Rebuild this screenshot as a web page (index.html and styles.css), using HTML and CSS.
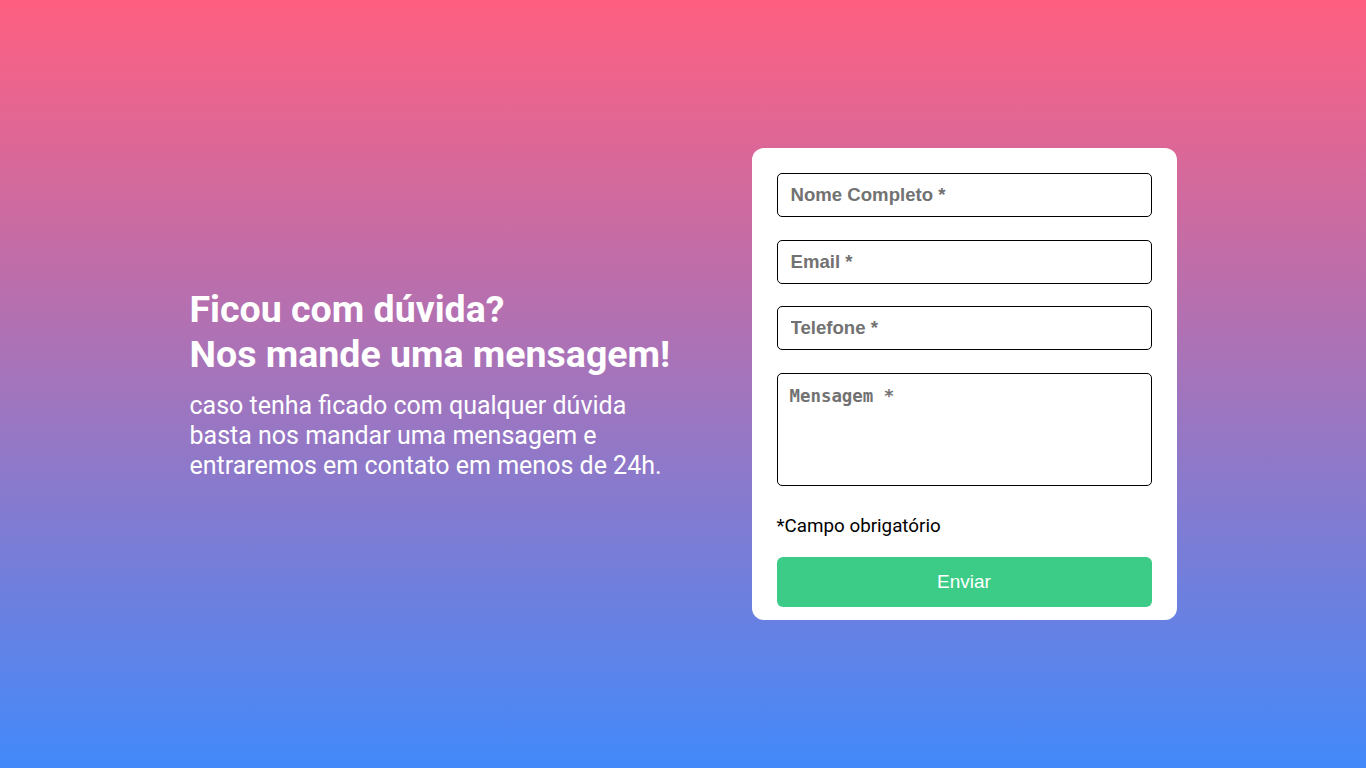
FILE: index.html
```html
<!DOCTYPE html>
<html lang="pt-BR">
<head>
<meta charset="utf-8">
<title>Contato</title>
<link rel="stylesheet" href="styles.css">
</head>
<body>
<main class="page">
  <section class="intro">
    <h1 class="title">Ficou com dúvida?<br>Nos mande uma mensagem!</h1>
    <p class="lead">caso tenha ficado com qualquer dúvida basta nos mandar uma mensagem e entraremos em contato em menos de 24h.</p>
  </section>
  <form class="card">
    <input class="field" type="text" placeholder="Nome Completo *">
    <input class="field" type="email" placeholder="Email *">
    <input class="field" type="tel" placeholder="Telefone *">
    <textarea class="field area" placeholder="Mensagem *"></textarea>
    <p class="note">*Campo obrigatório</p>
    <button class="submit" type="button">Enviar</button>
  </form>
</main>
</body>
</html>
```

FILE: styles.css
```css
* { box-sizing: border-box; }
html, body { margin: 0; height: 100%; }
body {
  background: linear-gradient(180deg, #ff5f80 0%, #a374bc 50%, #4289fa 100%);
  font-family: Roboto, "Liberation Sans", sans-serif;
}
.page {
  height: 768px;
  display: flex;
  align-items: center;
  justify-content: center;
  gap: 82px;
}
.intro {
  width: 480px;
  color: #fff;
}
.title {
  margin: 0 0 14.5px;
  font-size: 37.5px;
  font-weight: 700;
  line-height: 45px;
  white-space: nowrap;
}
.lead {
  margin: 0;
  font-size: 25px;
  line-height: 30px;
}
.card {
  width: 425px;
  background: #fff;
  border-radius: 12px;
  padding: 25px 25px 13px;
  display: flex;
  flex-direction: column;
}
.field {
  width: 375px;
  height: 44px;
  margin: 0 0 22.67px;
  border: 1px solid #000;
  border-radius: 5px;
  padding: 0 13px;
  font-family: "Liberation Sans", Arial, sans-serif;
  font-size: 18.6px;
  font-weight: 700;
  color: #333;
  outline: none;
}
.field::placeholder { color: #727272; opacity: 1; }
.area {
  height: 113px;
  padding: 12px 12px;
  resize: none;
  font-family: "DejaVu Sans Mono", monospace;
  font-size: 17.4px;
  margin-bottom: 27px;
}
.note {
  margin: 1px 0 19px;
  font-size: 18.8px;
  line-height: 24px;
  color: #000;
}
.submit {
  height: 50px;
  border: none;
  border-radius: 6px;
  background: #3ccc88;
  color: #fff;
  font-family: "Liberation Sans", Arial, sans-serif;
  font-size: 19px;
}
```
